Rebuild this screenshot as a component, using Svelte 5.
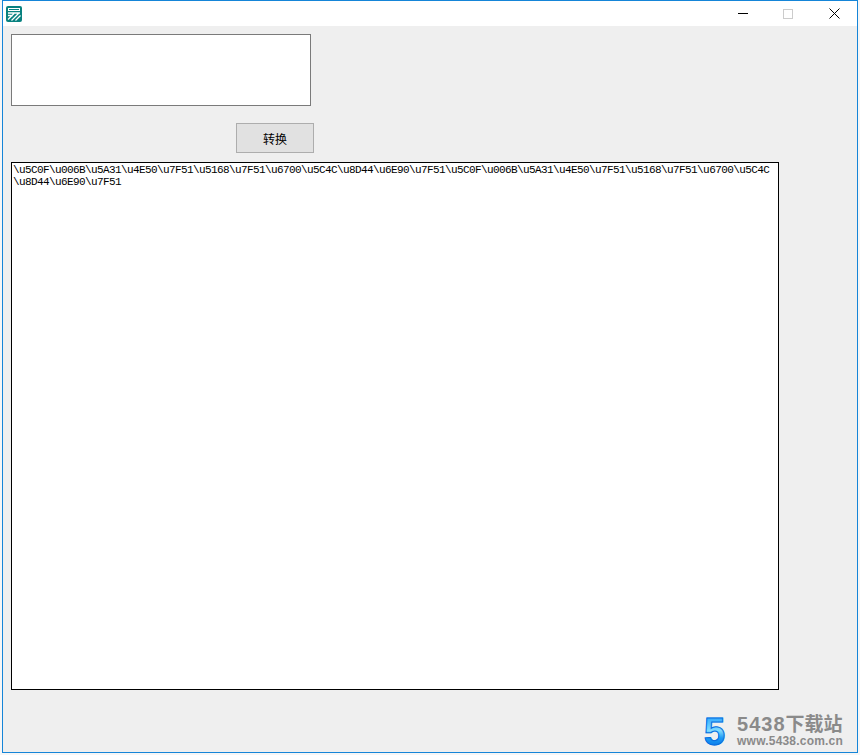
<script>
  // one run of the converted string, shown twice and wrapped by the box
  const codes = ['5C0F', '006B', '5A31', '4E50', '7F51', '5168', '7F51', '6700', '5C4C', '8D44', '6E90', '7F51']
  const run = codes.map((c) => '\\u' + c).join('')
  let output = $state(run + run)
  let input = $state('')
</script>

<div class="window">
  <header class="titlebar">
    <svg class="app-icon" width="16" height="16" viewBox="0 0 16 16">
      <rect x="0" y="0" width="16" height="16" rx="2" fill="#08817f" />
      <rect x="2" y="2" width="12" height="3" fill="#fff" />
      <rect x="3" y="3" width="10" height="1" fill="#08817f" />
      <path d="M2 7h12M2 9.5h5M2 13.5l6-6M5.5 14.5l7-7M9.5 14.5l5-5" stroke="#fff" stroke-width="1.3" fill="none" />
    </svg>
    <div class="controls">
      <span class="min"></span>
      <span class="max"></span>
      <svg class="close" width="11" height="11" viewBox="0 0 11 11">
        <path d="M0.5 0.5l10 10M10.5 0.5l-10 10" stroke="#000" stroke-width="1" fill="none" />
      </svg>
    </div>
  </header>

  <main class="body">
    <textarea class="input" bind:value={input}></textarea>
    <div class="actions">
      <button class="convert">转换</button>
    </div>
    <div class="output">{output}</div>
  </main>

  <div class="watermark">
    <span class="five">5</span>
    <div class="brand">
      <span class="name"><span class="digits">5438</span>下载站</span>
      <span class="url">www.5438.com.cn</span>
    </div>
  </div>
</div>

<style>
  :global(body) {
    background: #f6f6f6;
  }

  .window {
    position: relative;
    box-sizing: border-box;
    width: 856px;
    height: 753px;
    margin-left: 2px;
    border: 1px solid #1585d8;
    background: #efefef;
    font-family: "Noto Sans CJK SC", sans-serif;
    display: flex;
    flex-direction: column;
  }

  .titlebar {
    height: 25px;
    background: #fff;
    display: flex;
    align-items: center;
    justify-content: space-between;
    padding-left: 3px;
  }

  .controls {
    display: flex;
    align-items: center;
    gap: 35px;
    padding-right: 17px;
  }

  .min {
    width: 10px;
    height: 1px;
    background: #000;
  }

  .max {
    width: 8px;
    height: 8px;
    margin-right: 1px;
    border: 1px solid #ccc;
  }

  .close {
    display: block;
  }

  .body {
    padding: 8px 0 0 8px;
    display: flex;
    flex-direction: column;
  }

  .input {
    box-sizing: border-box;
    width: 300px;
    height: 72px;
    border: 1px solid #7a7a7a;
    background: #fff;
    padding: 0;
    resize: none;
    outline: none;
    display: block;
  }

  .actions {
    margin-top: 17px;
    padding-left: 225px;
  }

  .convert {
    box-sizing: border-box;
    width: 78px;
    height: 30px;
    border: 1px solid #adadad;
    background: #e1e1e1;
    font-family: inherit;
    font-size: 12px;
    color: #000;
    padding: 0;
    display: block;
  }

  .output {
    box-sizing: border-box;
    width: 768px;
    height: 528px;
    margin-top: 9px;
    border: 1px solid #000;
    background: #fff;
    padding: 1px 7px 0 1px;
    font-family: "Liberation Mono", monospace;
    font-size: 11px;
    letter-spacing: -0.6px;
    line-height: 12px;
    color: #000;
    overflow-wrap: anywhere;
  }

  .watermark {
    position: absolute;
    right: 14px;
    bottom: 5px;
    display: flex;
    align-items: flex-end;
    gap: 12px;
  }

  .five {
    font-family: "Liberation Sans", sans-serif;
    font-weight: 700;
    font-size: 38px;
    line-height: 30px;
    height: 30px;
    background: linear-gradient(180deg, #2fa8ff, #7fdcff 45%, #1c9bf5 70%, #0a78e8);
    background-clip: text;
    -webkit-background-clip: text;
    color: transparent;
    -webkit-text-stroke: 1px #0a6fe0;
  }

  .brand {
    display: flex;
    flex-direction: column;
    color: #8a8a8a;
    font-weight: 700;
    white-space: nowrap;
  }

  .name {
    font-size: 19px;
    line-height: 20px;
  }

  .digits {
    font-family: "Liberation Sans", sans-serif;
    font-size: 20px;
    letter-spacing: 1px;
  }

  .url {
    font-family: "Liberation Sans", sans-serif;
    font-size: 12px;
    letter-spacing: 0.2px;
    line-height: 12px;
    margin-top: 1px;
  }
</style>
